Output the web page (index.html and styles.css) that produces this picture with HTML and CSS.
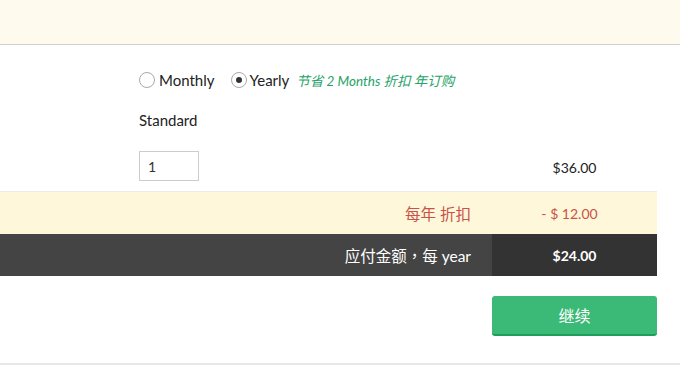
FILE: index.html
```html
<!DOCTYPE html>
<html lang="zh">
<head>
    <meta charset="UTF-8">
    <meta name="viewport" content="width=device-width, initial-scale=1.0">
    <title>Subscription</title>
    <link rel="stylesheet" href="styles.css">
</head>
<body>

    <div class="banner"></div>

    <div class="plan">
        <!-- billing period -->
        <div class="options">
            <div class="period">
                <label class="radio"><span class="dot"></span>Monthly</label>
                <label class="radio checked"><span class="dot"></span>Yearly</label>
                <span class="save">节省 2 Months 折扣 年订购</span>
            </div>
            <div class="plan-name">Standard</div>
        </div>

        <div class="row qty-row">
            <div class="cell-left">
                <input type="text" class="qty" value="1">
            </div>
            <div class="cell-price">$36.00</div>
        </div>

        <div class="row discount">
            <div class="cell-left label">每年 折扣</div>
            <div class="cell-price">- $ 12.00</div>
        </div>

        <div class="row total">
            <div class="cell-left label">应付金额<span class="comma">，</span>每 year</div>
            <div class="cell-price">$24.00</div>
        </div>

        <div class="actions">
            <button class="continue">继续</button>
        </div>
    </div>

    <div class="footer"></div>

</body>
</html>
```

FILE: styles.css
```css
body {
    margin: 0;
    font-family: Lato, "Noto Sans CJK SC", sans-serif;
    color: #222;
    background: #fff;
}

.banner {
    height: 44px;
    background-color: #fffaee;
    border-bottom: 1px solid #d6d1cc;
}

.plan {
    width: 657px;
}

.options {
    padding-left: 139px;
    padding-top: 25px;
}

.period {
    display: flex;
    align-items: center;
    height: 20px;
    font-size: 15px;
}

.radio {
    display: flex;
    align-items: center;
    margin-right: 16px;
}

.radio .dot {
    width: 14px;
    height: 14px;
    border: 1px solid #a9a9a9;
    border-radius: 50%;
    margin-right: 4px;
    display: flex;
    align-items: center;
    justify-content: center;
    background: #fff;
}

.radio.checked .dot {
    margin-right: 3px;
}

.radio.checked {
    margin-right: 7px;
}

.radio.checked .dot::after {
    content: "";
    width: 6px;
    height: 6px;
    border-radius: 50%;
    background: #333;
}

.save {
    font-size: 13.5px;
    font-style: italic;
    color: #26a269;
}

.plan-name {
    margin-top: 20px;
    height: 20px;
    line-height: 20px;
    font-size: 15px;
}

.row {
    display: grid;
    grid-template-columns: 492px 165px;
}

.cell-price {
    display: flex;
    align-items: center;
    justify-content: center;
    font-size: 14px;
}

.qty-row {
    padding-top: 21px;
    padding-bottom: 10px;
}

.qty-row .cell-left {
    padding-left: 139px;
}

.qty-row .cell-price {
    padding-top: 3px;
}

.qty {
    width: 60px;
    height: 30px;
    box-sizing: border-box;
    border: 1px solid #ccc;
    padding: 0 8px;
    font-family: Lato, sans-serif;
    font-size: 14px;
    color: #333;
    display: block;
}

.label {
    display: flex;
    align-items: center;
    justify-content: flex-end;
    padding-right: 21px;
    font-size: 15.5px;
}

.comma {
    font-family: "Noto Sans CJK TC", sans-serif;
}

.discount {
    border-top: 1px solid #ececec;
    height: 42px;
    background-color: #fef7d9;
    color: #c9524a;
}

.discount .cell-price {
    padding-right: 10px;
}

.total {
    height: 42px;
    color: #fff;
}

.total .cell-left {
    background-color: #444;
}

.total .cell-price {
    background-color: #333;
    font-weight: bold;
}

.actions {
    display: flex;
    justify-content: flex-end;
    margin-top: 20px;
}

.continue {
    width: 165px;
    height: 40px;
    border: none;
    border-bottom: 2px solid #1f9e5a;
    border-radius: 3px;
    background-color: #3bba77;
    color: #fff;
    font-family: "Noto Sans CJK SC", sans-serif;
    font-size: 16px;
    cursor: pointer;
}

.footer {
    margin-top: 27px;
    border-top: 2px solid #e8e8e8;
}
```
